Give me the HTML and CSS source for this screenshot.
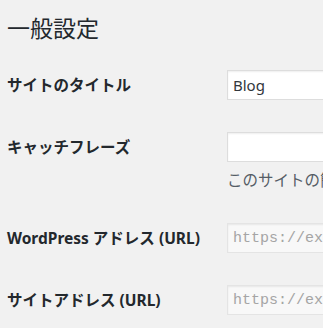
FILE: index.html
```html
<!DOCTYPE html>
<html lang="ja">
<head>
    <meta charset="UTF-8">
    <title>一般設定</title>
    <link rel="stylesheet" href="styles.css">
</head>
<body>
    <div class="wrap">
        <h1>一般設定</h1>
        <form class="form-table">
            <div class="row">
                <label class="row-label" for="blogname">サイトのタイトル</label>
                <div class="row-field">
                    <input type="text" id="blogname" class="regular-text" value="Blog">
                </div>
            </div>
            <div class="row">
                <label class="row-label" for="blogdescription">キャッチフレーズ</label>
                <div class="row-field">
                    <input type="text" id="blogdescription" class="regular-text" value="">
                    <p class="description">このサイトの簡単な説明。</p>
                </div>
            </div>
            <div class="row">
                <label class="row-label" for="siteurl">WordPress アドレス (URL)</label>
                <div class="row-field">
                    <input type="url" id="siteurl" class="regular-text code" value="https://example.com" disabled>
                </div>
            </div>
            <div class="row">
                <label class="row-label" for="home">サイトアドレス (URL)</label>
                <div class="row-field">
                    <input type="url" id="home" class="regular-text code" value="https://example.com" disabled>
                </div>
            </div>
        </form>
    </div>
</body>
</html>
```

FILE: styles.css
```css
html, body {
    margin: 0;
    padding: 0;
    overflow: hidden;
}

body {
    background: #f1f1f1;
    color: #23282d;
    font-family: "Noto Sans", "Noto Sans CJK JP", sans-serif;
    font-size: 15px;
}

.wrap {
    padding-left: 7px;
    width: 700px;
}

h1 {
    font-family: "Noto Sans CJK JP", sans-serif;
    font-size: 23px;
    font-weight: 400;
    line-height: 30px;
    margin: 0;
    padding-top: 12px;
}

.form-table {
    margin-top: 13px;
}

.row {
    display: grid;
    grid-template-columns: 220px 1fr;
}

.row-label {
    font-family: "Noto Sans", "Noto Sans CJK JP", sans-serif;
    font-weight: bold;
    font-size: 15.5px;
    line-height: 20px;
    padding: 20px 0 0;
}

.row-field {
    padding: 15px 0 17px;
}

.regular-text {
    box-sizing: border-box;
    display: block;
    width: 350px;
    height: 30px;
    margin: 0;
    padding: 0 5px;
    border: 1px solid #dddddd;
    box-shadow: inset 0 1px 2px rgba(0, 0, 0, 0.07);
    background: #fff;
    color: #32373c;
    font-family: "Noto Sans", "Liberation Sans", sans-serif;
    font-size: 15px;
    outline: none;
}

.regular-text:disabled {
    background: #f8f8f8;
    border-color: #e4e4e4;
    color: #a5a5a5;
}

.code {
    font-family: "Liberation Mono", "DejaVu Sans Mono", monospace;
    font-size: 15px;
}

.description {
    margin: 6px 0 0;
    line-height: 23px;
    font-family: "Noto Sans CJK JP", sans-serif;
    font-size: 15.5px;
    color: #555d66;
}
```
